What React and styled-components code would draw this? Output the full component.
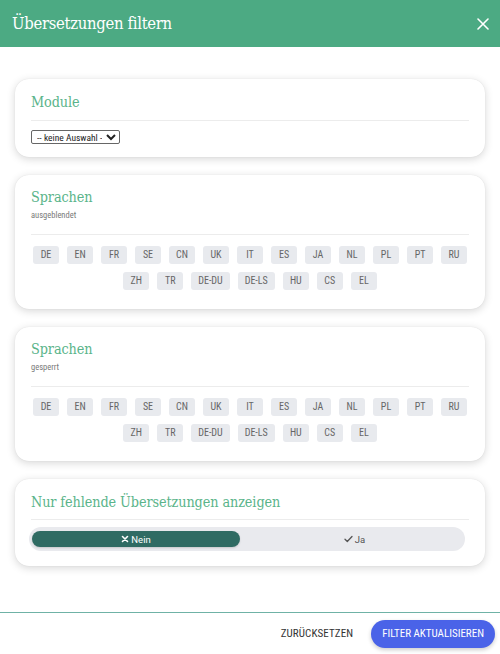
import React, { useState } from 'react'
import styled, { createGlobalStyle } from 'styled-components'

const GlobalStyle = createGlobalStyle`
  html, body { margin: 0; padding: 0; background: #fff; }
  body { font-family: Roboto, "Liberation Sans", sans-serif; }
  * { box-sizing: border-box; }
`

const SLAB = `"DejaVu Serif", "Liberation Serif", serif`
const NARROW = `"Roboto Condensed", "Liberation Sans Narrow", Roboto, sans-serif`

const Page = styled.div`
  width: 500px;
  height: 654px;
  display: flex;
  flex-direction: column;
  background: #fff;
  overflow: hidden;
`

const Header = styled.header`
  height: 47px;
  flex-shrink: 0;
  background: #4caa83;
  display: flex;
  align-items: center;
  justify-content: space-between;
  padding: 0 10px 0 12px;
`

const Title = styled.h1`
  margin: 0;
  color: #fff;
  font-family: ${SLAB};
  font-stretch: condensed;
  font-weight: 300;
  font-size: 16.5px;
  letter-spacing: -0.3px;
`

const CloseButton = styled.button`
  border: 0;
  background: none;
  padding: 0;
  width: 14px;
  height: 14px;
  display: grid;
  place-items: center;
  cursor: pointer;
`

const Body = styled.main`
  flex: 1;
  display: flex;
  flex-direction: column;
  gap: 18px;
  padding: 32px 15px 0;
`

const Card = styled.section`
  background: #fff;
  border-radius: 14px;
  box-shadow: 0 2px 8px rgba(0, 0, 0, 0.16), 0 0 1px rgba(0, 0, 0, 0.12);
  padding: ${p => p.$top || 13}px 16px ${p => p.$bottom || 13}px;
`

const CardTitle = styled.h2`
  margin: 0;
  color: #5ab48a;
  font-family: ${SLAB};
  font-stretch: condensed;
  font-weight: 400;
  font-size: 14.3px;
  line-height: 20px;
  letter-spacing: -0.1px;
`

const SubLabel = styled.div`
  font-family: ${NARROW};
  font-size: 8.5px;
  color: #7a7a7a;
  margin-top: 3px;
  line-height: 11px;
`

const Divider = styled.hr`
  border: 0;
  border-top: 1px solid #ececec;
  margin: ${p => p.$gap || 8}px 0 ${p => p.$after || 9}px;
`

const Select = styled.select`
  display: block;
  font-family: ${NARROW};
  font-size: 9.5px;
  height: 14px;
  width: 89px;
  padding: 0 1px;
  border: 1px solid #666;
  border-radius: 2px;
  background: #fff;
  color: #222;
`

const ChipWrap = styled.div`
  display: flex;
  flex-wrap: wrap;
  justify-content: center;
  gap: 8px 8px;
`

const Chip = styled.button`
  height: 18px;
  min-width: 26px;
  padding: 0 7px;
  border: 0;
  border-radius: 3px;
  background: #e8eaee;
  color: #666;
  font-family: ${NARROW};
  font-size: 10px;
  line-height: 18px;
  cursor: pointer;
`

const Toggle = styled.div`
  display: grid;
  grid-template-columns: 1fr 1fr;
  height: 24px;
  margin: 0 4px 0 -2px;
  padding: 4px 3px;
  background: #e9eaee;
  border-radius: 12px;
`

const ToggleOption = styled.button`
  border: 0;
  border-radius: 8px;
  margin-right: ${p => (p.$active ? 7 : 0)}px;
  background: ${p => (p.$active ? '#2f6b63' : 'transparent')};
  color: ${p => (p.$active ? '#fff' : '#555')};
  font-family: Roboto, "Liberation Sans", sans-serif;
  font-size: 9.5px;
  display: flex;
  align-items: center;
  justify-content: center;
  gap: 2px;
  padding: 0;
  box-shadow: ${p => (p.$active ? '0 1px 2px rgba(0,0,0,0.15)' : 'none')};
  cursor: pointer;
`

const Footer = styled.footer`
  height: 42px;
  flex-shrink: 0;
  border-top: 1px solid #6fb2a6;
  display: flex;
  align-items: center;
  justify-content: flex-end;
  gap: 18px;
  padding: 0 5px 0 0;
`

const TextButton = styled.button`
  border: 0;
  background: none;
  font-family: ${NARROW};
  font-size: 11px;
  color: #333;
  letter-spacing: 0.1px;
  padding: 0;
  cursor: pointer;
`

const PrimaryButton = styled.button`
  border: 0;
  background: #4a63e8;
  color: #fff;
  height: 28px;
  padding: 0 11px;
  border-radius: 14px;
  font-family: ${NARROW};
  font-size: 11px;
  box-shadow: 0 2px 4px rgba(0, 0, 0, 0.2);
  cursor: pointer;
`

const LANGS = ['DE', 'EN', 'FR', 'SE', 'CN', 'UK', 'IT', 'ES', 'JA', 'NL', 'PL', 'PT', 'RU', 'ZH', 'TR', 'DE-DU', 'DE-LS', 'HU', 'CS', 'EL']

function LanguageCard({ sub }) {
  return (
    <Card $top={12} $bottom={19}>
      <CardTitle>Sprachen</CardTitle>
      <SubLabel>{sub}</SubLabel>
      <Divider $gap={13} $after={11} />
      <ChipWrap>
        {LANGS.map(l => (
          <Chip key={l}>{l}</Chip>
        ))}
      </ChipWrap>
    </Card>
  )
}

export default function App() {
  const [missing, setMissing] = useState(false)

  return (
    <Page>
      <GlobalStyle />
      <Header>
        <Title>Übersetzungen filtern</Title>
        <CloseButton aria-label="close">
          <svg width="12" height="12" viewBox="0 0 12 12">
            <path d="M1 1L11 11M11 1L1 11" stroke="#fff" strokeWidth="1.6" strokeLinecap="round" />
          </svg>
        </CloseButton>
      </Header>

      <Body>
        <Card>
          <CardTitle>Module</CardTitle>
          <Divider $gap={8} $after={9} />
          <Select defaultValue="">
            <option value="">-- keine Auswahl --</option>
          </Select>
        </Card>

        <LanguageCard sub="ausgeblendet" />
        <LanguageCard sub="gesperrt" />

        <Card $top={13} $bottom={15}>
          <CardTitle>Nur fehlende Übersetzungen anzeigen</CardTitle>
          <Divider $gap={7} $after={7} />
          <Toggle>
            <ToggleOption $active={!missing} onClick={() => setMissing(false)}>
              <svg width="8" height="8" viewBox="0 0 8 8">
                <path d="M1.5 1.5L6.5 6.5M6.5 1.5L1.5 6.5" stroke="currentColor" strokeWidth="1.6" strokeLinecap="round" />
              </svg>
              Nein
            </ToggleOption>
            <ToggleOption $active={missing} onClick={() => setMissing(true)}>
              <svg width="9" height="8" viewBox="0 0 9 8">
                <path d="M1 4.2L3.3 6.5L8 1.5" fill="none" stroke="currentColor" strokeWidth="1.3" strokeLinecap="round" strokeLinejoin="round" />
              </svg>
              Ja
            </ToggleOption>
          </Toggle>
        </Card>
      </Body>

      <Footer>
        <TextButton>ZURÜCKSETZEN</TextButton>
        <PrimaryButton>FILTER AKTUALISIEREN</PrimaryButton>
      </Footer>
    </Page>
  )
}
